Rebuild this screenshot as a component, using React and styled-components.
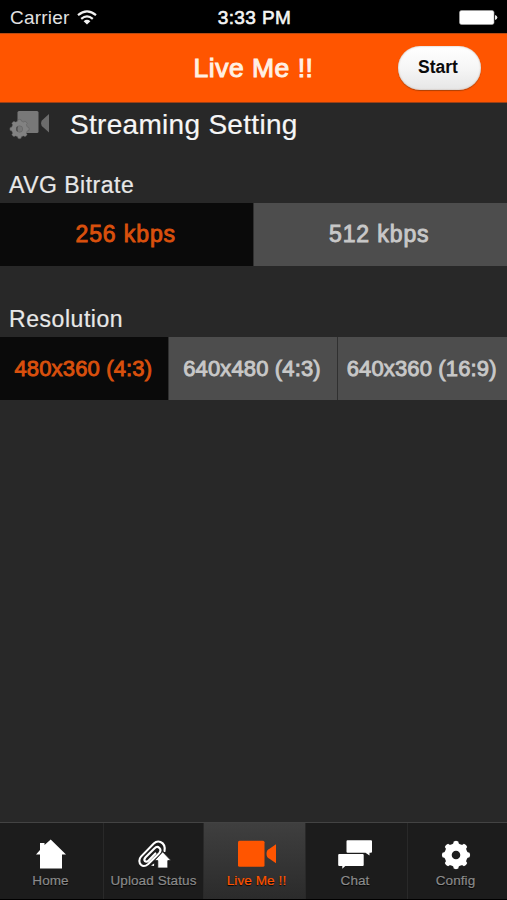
import React, { useState } from 'react'
import styled, { createGlobalStyle } from 'styled-components'

const colors = {
  accent: '#ff5500',
  accentDim: '#d9500d',
  background: '#282828',
  segment: '#4d4d4d',
  segmentActive: '#0a0a0a',
  segmentText: '#c8c8c8',
  tabText: '#8b8b8b',
}

const GlobalStyle = createGlobalStyle`
  * {
    box-sizing: border-box;
  }
  body {
    margin: 0;
    background: ${colors.background};
    font-family: "Liberation Sans", Arial, sans-serif;
  }
  button {
    margin: 0;
    padding: 0;
    border: 0;
    font-family: inherit;
  }
`

const Screen = styled.div`
  display: flex;
  flex-direction: column;
  width: 507px;
  height: 900px;
  overflow: hidden;
  background: ${colors.background};
`

const StatusBar = styled.div`
  display: grid;
  grid-template-columns: 1fr auto 1fr;
  align-items: center;
  height: 33px;
  padding: 3px 8px 0 10px;
  background: #000;
  color: #f4f4f4;
  font-size: 19px;
  line-height: 24px;
`
const Carrier = styled.div`
  display: flex;
  align-items: center;
  gap: 8px;
  color: #e2e2e2;
  letter-spacing: 0.2px;
`
const Clock = styled.span`
  letter-spacing: 0.4px;
  -webkit-text-stroke: 0.6px currentColor;
`
const Battery = styled.svg`
  justify-self: end;
  margin: -1px 1px 0 0;
`

const NavBar = styled.header`
  display: grid;
  grid-template-columns: 1fr auto 1fr;
  align-items: center;
  height: 70px;
  padding: 0 26px;
  border-top: 1px solid #b84a12;
  border-bottom: 1px solid #9a4017;
  background: ${colors.accent};
`
const NavTitle = styled.h1`
  grid-column: 2;
  margin: 0;
  color: #fff0e4;
  font-size: 26.5px;
  font-weight: normal;
  line-height: 32px;
  letter-spacing: 0.5px;
  -webkit-text-stroke: 1px currentColor;
`
const StartButton = styled.button`
  justify-self: end;
  width: 83px;
  height: 44px;
  margin-top: -1px;
  padding: 0 3px 1px 0;
  border-radius: 22px;
  background: linear-gradient(#fff, #f6f6f6 50%, #e6e6e6);
  box-shadow: inset 0 0 2px #b9a79c, 0 1px 1px rgba(120, 50, 10, 0.6);
  color: #0b0b0b;
  font-size: 17.5px;
  font-weight: bold;
`

const Content = styled.main`
  flex: 1;
`
const Heading = styled.div`
  display: flex;
  align-items: center;
  gap: 20px;
  height: 45px;
  padding: 0 0 2px 9px;
`
const HeadingText = styled.h2`
  margin: 0;
  color: #f6f6f6;
  font-size: 28px;
  font-weight: normal;
  line-height: 32px;
  letter-spacing: 0.3px;
  -webkit-text-stroke: 0.2px currentColor;
`
const Setting = styled.section`
  height: 134px;
  padding-top: 22px;
`
const SettingLabel = styled.h3`
  height: 33px;
  margin: 0;
  padding: 1px 0 0 9px;
  color: #e8e8e8;
  font-size: 23px;
  font-weight: normal;
  line-height: 29px;
  letter-spacing: ${props => props.$spacing}px;
  -webkit-text-stroke: 0.2px currentColor;
`
const Segments = styled.div`
  display: flex;
  height: 63px;
`
const Segment = styled.button`
  flex: 1 1 0;
  background: ${props => (props.$active ? colors.segmentActive : colors.segment)};
  color: ${props => (props.$active ? colors.accentDim : colors.segmentText)};
  font-size: ${props => props.$size}px;
  letter-spacing: ${props => props.$spacing}px;
  padding-right: 1px;
  white-space: nowrap;
  -webkit-text-stroke: 0.9px currentColor;

  & + & {
    padding-right: 2px;
    border-left: 1px solid #303030;
  }
`

const TabBar = styled.nav`
  display: grid;
  grid-template-columns: 103px 100px 102px 102px 100px;
  height: 78px;
  border-top: 1px solid #434343;
  border-bottom: 1px solid #000;
  background: #1c1c1c;
`
const Tab = styled.button`
  display: flex;
  flex-direction: column;
  align-items: center;
  min-width: 0;
  padding: 15px ${props => props.$right || 0}px 0 ${props => props.$left || 0}px;
  background: ${props => (props.$active ? 'linear-gradient(#3f3f3f, #2b2b2b)' : 'transparent')};
  color: ${props => (props.$active ? colors.accent : '#fff')};

  & + & {
    border-left: 1px solid #292929;
  }
`
const TabLabel = styled.span`
  margin-top: 3px;
  color: ${props => (props.$active ? colors.accent : colors.tabText)};
  font-size: 13.5px;
  line-height: 16px;
  letter-spacing: 0.1px;
  text-shadow: 0 1px 1px #000;
  white-space: nowrap;
  -webkit-text-stroke: 0.2px currentColor;
`

const gearPath = (cx, cy, r, hole) => {
  const teeth = 8
  let d = ''
  for (let i = 0; i < teeth; i += 1) {
    const mid = (i * 2 * Math.PI) / teeth - Math.PI / 2
    const points = [[-0.3, 0.83], [-0.22, 0.86], [-0.17, 0.98], [0, 1.01], [0.17, 0.98], [0.22, 0.86], [0.3, 0.83]]
    points.forEach(([a, k]) => {
      const x = cx + Math.cos(mid + a) * r * k
      const y = cy + Math.sin(mid + a) * r * k
      d += `${d ? 'L' : 'M'}${x.toFixed(2)} ${y.toFixed(2)}`
    })
  }
  return `${d}ZM${cx - hole} ${cy}a${hole} ${hole} 0 1 0 ${hole * 2} 0a${hole} ${hole} 0 1 0 ${-hole * 2} 0Z`
}

const WifiIcon = () => (
  <svg width='20' height='16' viewBox='0 0 20 16' fill='none' stroke='#f2f2f2' strokeWidth='2.2'>
    <path d='M1 5.2Q10 -2.4 19 5.2' />
    <path d='M4.2 8.8Q10 3.8 15.8 8.8' />
    <path d='M10 14.6L6.6 11.2Q10 8.5 13.4 11.2Z' fill='#f2f2f2' stroke='none' />
  </svg>
)

const BatteryIcon = () => (
  <Battery width='39' height='17' viewBox='0 0 39 17'>
    <rect x='0.5' y='1.5' width='34.5' height='14' rx='2' fill='#fff' stroke='#aaa' strokeWidth='0.6' />
    <path d='M36 6Q38.4 6.6 38.4 8.5T36 11Z' fill='#e8e8e8' />
  </Battery>
)

const StreamIcon = () => (
  <svg width='41' height='30' viewBox='0 0 41 30'>
    <rect x='8.5' y='1' width='21' height='22' rx='1.5' fill='#787878' />
    <path d='M40 4V22.5L34.5 17.5Q32 16 32 13.3T34.5 9Z' fill='#6c6c6c' />
    <path d={gearPath(10.5, 19, 9.6, 3.2)} fill='#828282' stroke='#5c5c5c' strokeWidth='0.5' fillRule='evenodd' />
    <circle cx='10.5' cy='19' r='2' fill='#777' />
  </svg>
)

const HomeIcon = () => (
  <svg width='32' height='32' viewBox='0 0 32 32' fill='currentColor'>
    <path d='M5 5H9.5V7L15.7 1.5L31 16.5H27V30.5H5V16.5H1L5 12Z' />
  </svg>
)

const UploadIcon = () => (
  <svg width='34' height='32' viewBox='0 0 34 32' fill='none'>
    <path
      d='M27.5 13C28.2 9 27 5.5 23.5 4C21 3 18.8 3.6 16.8 5.6L4 18.6C1.6 21.2 2 24.8 4 26.8C6 28.6 8.8 28 11 26.2L22 15.4C23.8 13.4 23.6 11.2 22.4 10C21 8.6 19 8.8 17.4 10.4L8.6 19.2C7 21 7.2 22.4 8 23.2C9 24 10.4 23.6 11.6 22.4L18.4 15.4'
      stroke='currentColor'
      strokeWidth='2.1'
      strokeLinecap='round'
    />
    <path d='M25.7 13.8L34 22.6H30.8V30H20.8V22.6H17.6Z' fill='currentColor' stroke='#1c1c1c' strokeWidth='0.8' />
    <path d='M14 27.5L17.2 25.5L17 28Z' fill='currentColor' />
  </svg>
)

const LiveIcon = () => (
  <svg width='40' height='32' viewBox='0 0 40 32' fill='currentColor'>
    <rect x='1' y='2.8' width='26.5' height='26' rx='1.5' />
    <path d='M39 6.3V25.3L32.5 20.8Q29.5 19.8 29.5 15.8T32.5 10.8Z' />
  </svg>
)

const ChatIcon = () => (
  <svg width='36' height='32' viewBox='0 0 36 32' fill='currentColor'>
    <path d='M10.5 2.2H34Q35 2.2 35 3.2V13.8Q35 14.8 34 14.8H32.5V17.6L28.5 14.8H10.5Q9.5 14.8 9.5 13.8V3.2Q9.5 2.2 10.5 2.2Z' />
    <path d='M2.2 16H25.7Q26.7 16 26.7 17V27Q26.7 28 25.7 28H8.3L5.3 30.8V28H2.2Q1.2 28 1.2 27V17Q1.2 16 2.2 16Z' />
  </svg>
)

const ConfigIcon = () => (
  <svg width='32' height='32' viewBox='0 0 32 32' fill='currentColor'>
    <path d={gearPath(16, 17, 14, 4.3)} fillRule='evenodd' />
  </svg>
)

const bitrates = ['256 kbps', '512 kbps']
const resolutions = ['480x360 (4:3)', '640x480 (4:3)', '640x360 (16:9)']
const tabs = [
  { name: 'Home', Icon: HomeIcon, right: 2 },
  { name: 'Upload Status', Icon: UploadIcon },
  { name: 'Live Me !!', Icon: LiveIcon, left: 4 },
  { name: 'Chat', Icon: ChatIcon, right: 3 },
  { name: 'Config', Icon: ConfigIcon, right: 4 },
]

const SegmentedControl = ({ options, size, spacing }) => {
  const [selected, setSelected] = useState(options[0])

  return (
    <Segments>
      {options.map(option => (
        <Segment
          key={option}
          $active={option === selected}
          $size={size}
          $spacing={spacing}
          onClick={() => setSelected(option)}
        >
          {option}
        </Segment>
      ))}
    </Segments>
  )
}

const App = () => {
  const [tab, setTab] = useState('Live Me !!')

  return (
    <Screen>
      <GlobalStyle />
      <StatusBar>
        <Carrier>
          Carrier
          <WifiIcon />
        </Carrier>
        <Clock>3:33 PM</Clock>
        <BatteryIcon />
      </StatusBar>
      <NavBar>
        <NavTitle>Live Me !!</NavTitle>
        <StartButton>Start</StartButton>
      </NavBar>
      <Content>
        <Heading>
          <StreamIcon />
          <HeadingText>Streaming Setting</HeadingText>
        </Heading>
        <Setting>
          <SettingLabel $spacing={0.5}>AVG Bitrate</SettingLabel>
          <SegmentedControl options={bitrates} size={23} spacing={0.9} />
        </Setting>
        <Setting>
          <SettingLabel $spacing={0.55}>Resolution</SettingLabel>
          <SegmentedControl options={resolutions} size={22} spacing={0.15} />
        </Setting>
      </Content>
      <TabBar>
        {tabs.map(({ name, Icon, left, right }) => (
          <Tab
            key={name}
            $active={name === tab}
            $left={left}
            $right={right}
            onClick={() => setTab(name)}
          >
            <Icon />
            <TabLabel $active={name === tab}>{name}</TabLabel>
          </Tab>
        ))}
      </TabBar>
    </Screen>
  )
}

export default App
